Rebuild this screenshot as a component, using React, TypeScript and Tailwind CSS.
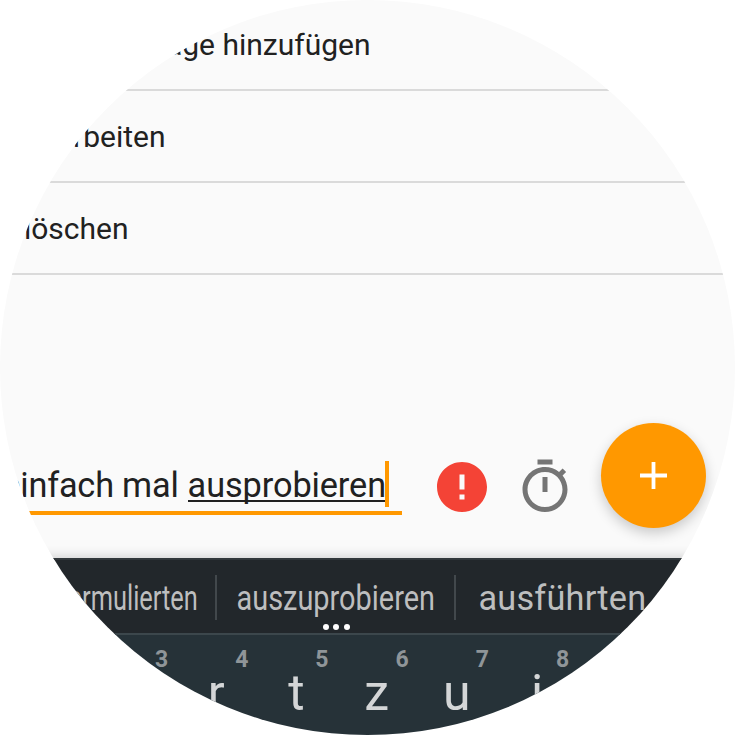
const menuItems = [
  { label: "Einträge hinzufügen", width: "w-[370.5px]" },
  { label: "bearbeiten", width: "w-[165.5px]" },
  { label: "löschen", width: "w-[128.5px]" },
];

const keys = [
  { digit: "3", letter: "e" },
  { digit: "4", letter: "r" },
  { digit: "5", letter: "t" },
  { digit: "6", letter: "z" },
  { digit: "7", letter: "u" },
  { digit: "8", letter: "i" },
];

function MenuList() {
  return (
    <ul className="h-[275px] text-[30px] text-[#212121]">
      {menuItems.map((item, i) => (
        <li
          key={item.label}
          className={`flex items-center border-b-2 border-[#dadada] ${i === 0 ? "h-[91px]" : "h-[92px]"}`}
        >
          <span className={`flex justify-end whitespace-nowrap ${item.width}`}>{item.label}</span>
        </li>
      ))}
    </ul>
  );
}

function Composer() {
  return (
    <div className="flex h-[283px] items-start pt-[148px]">
      <div className="mt-[38px] flex h-[54px] w-[402px] items-start border-b-4 border-[#ff9800] text-[34.3px] text-[#212121]">
        <div className="flex w-[385px] justify-end gap-[9px] leading-[49px] tracking-[-0.1px] whitespace-nowrap">
          <span className="tracking-[-0.2px]">einfach mal</span>
          <span className="-mr-px h-[41px] border-b-2 border-[#212121]">ausprobieren</span>
        </div>
        <span className="relative h-[46px] w-1 bg-[#ff9800]" />
      </div>
      <svg viewBox="0 0 24 24" className="mt-[34px] ml-[30px] size-[60px]" fill="#f44336">
        <path d="M12 2C6.48 2 2 6.48 2 12s4.48 10 10 10 10-4.48 10-10S17.52 2 12 2zm1 15h-2v-2h2v2zm0-4h-2V7h2v6z" />
      </svg>
      <svg viewBox="0 0 24 24" className="mt-[34px] ml-[23px] size-[60px]" fill="#757575">
        <path d="M15 1H9v2h6V1zm-4 13h2V8h-2v6zm8.03-6.61l1.42-1.42c-.43-.51-.9-.99-1.41-1.41l-1.42 1.42C16.07 4.74 14.12 4 12 4c-4.97 0-9 4.03-9 9s4.02 9 9 9 9-4.03 9-9c0-2.12-.74-4.07-1.97-5.61zM12 20c-3.87 0-7-3.13-7-7s3.13-7 7-7 7 3.13 7 7-3.13 7-7 7z" />
      </svg>
      <button className="ml-[26px] flex size-[105px] items-center justify-center rounded-full bg-[#ff9800] shadow-[0_5px_13px_rgba(0,0,0,0.2)]">
        <svg viewBox="0 0 27 27" className="size-[27px]" fill="none" stroke="#ffffff" strokeWidth="3.8">
          <path d="M13.5 0v27M0 13.5h27" />
        </svg>
      </button>
    </div>
  );
}

function Suggestions() {
  return (
    <div className="relative flex h-[77px] items-start border-t-2 border-b-2 border-t-[#32383b] border-b-[#3c474c] bg-[#22272b] text-[34.3px] leading-[42px] text-[#bdbebf]">
      <div className="mt-[17px] flex w-[198px] justify-end">
        <span className="origin-right scale-x-[0.74]">formulierten</span>
      </div>
      <span className="mt-[15px] ml-[17px] h-[45px] w-0.5 bg-[#42484c]" />
      <div className="mt-[17px] flex w-[237px] justify-center">
        <span className="scale-x-[0.843]">auszuprobieren</span>
      </div>
      <span className="mt-[15px] h-[45px] w-0.5 bg-[#42484c]" />
      <span className="mt-[17px] ml-[22.5px] tracking-[0.2px]">ausführten</span>
      <div className="absolute top-[64px] left-[322.5px] flex gap-[4.5px]">
        <i className="size-1.5 rounded-full bg-white" />
        <i className="size-1.5 rounded-full bg-white" />
        <i className="size-1.5 rounded-full bg-white" />
      </div>
    </div>
  );
}

function KeyRow() {
  return (
    <div className="flex h-[100px] bg-[#263238] pl-[96px]">
      {keys.map((key) => (
        <div key={key.digit} className="flex w-[80.2px] shrink-0 flex-col items-center">
          <span className="mt-[13px] ml-[51px] text-[23px] leading-6 font-bold text-[#8f9598]">{key.digit}</span>
          <span className="-mt-[8px] text-[50px] leading-[58px] text-[#d4d6d7]">{key.letter}</span>
        </div>
      ))}
    </div>
  );
}

export default function App() {
  return (
    <div className="size-[735px] overflow-hidden bg-white">
      <main className="size-[735px] overflow-hidden rounded-full bg-[#fafafa] font-['Roboto',sans-serif]">
        <MenuList />
        <Composer />
        <div className="relative shadow-[0_-2px_10px_rgba(0,0,0,0.16)]">
          <Suggestions />
          <KeyRow />
        </div>
      </main>
    </div>
  );
}
